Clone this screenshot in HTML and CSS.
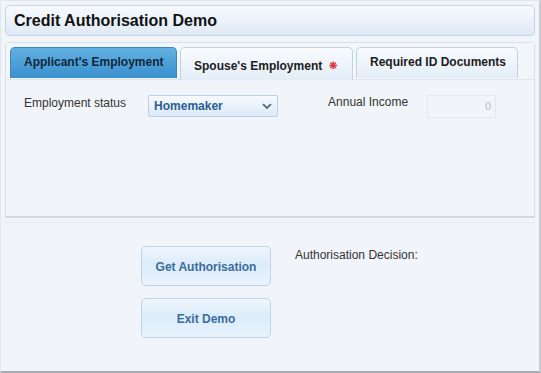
FILE: index.html
```html
<!DOCTYPE html>
<html>
<head>
<meta charset="utf-8">
<link rel="stylesheet" href="styles.css">
</head>
<body>
<div class="app">
  <header class="titlebar">Credit Authorisation Demo</header>
  <div class="tabpanel">
    <div class="tabs">
      <div class="tab active">Applicant's Employment</div>
      <div class="tab hover">Spouse's Employment <span class="req">&#x274B;</span></div>
      <div class="tab">Required ID Documents</div>
    </div>
    <div class="tab-body">
      <div class="field">
        <span class="label">Employment status</span>
        <div class="select"><span>Homemaker</span>
          <svg class="chev" width="10" height="7" viewBox="0 0 10 7"><path d="M1 1.2 L5 5 L9 1.2" fill="none" stroke="#4f6a86" stroke-width="1.8"/></svg>
        </div>
      </div>
      <div class="field income">
        <span class="label">Annual Income</span>
        <div class="input">0</div>
      </div>
    </div>
  </div>
  <div class="sep"></div>
  <div class="actions">
    <div class="buttons">
      <button class="btn">Get Authorisation</button>
      <button class="btn">Exit Demo</button>
    </div>
    <div class="decision">Authorisation Decision:</div>
  </div>
</div>
</body>
</html>
```
FILE: styles.css
```css
* { box-sizing: border-box; }
html, body { margin: 0; padding: 0; }
body {
  font-family: "Liberation Sans", Arial, sans-serif;
  background: #f1f4f8;
  color: #333;
}
.app {
  width: 541px;
  height: 373px;
  background: #f1f4f8;
  border: 1px solid #e2e7ee;
  border-right: 2px solid #c9ccd0;
  border-bottom: 2px solid #a9acb0;
  padding: 4px 4px 0 4px;
  display: flex;
  flex-direction: column;
}
.titlebar {
  height: 31px;
  border: 1px solid #c6d4e3;
  border-radius: 5px;
  background: linear-gradient(#f7fafd, #dfeaf6);
  font-weight: bold;
  font-size: 16px;
  color: #111;
  padding: 0 0 0 8px;
  line-height: 29px;
}
.tabpanel {
  margin-top: 6px;
  height: 176px;
  border: 1px solid #d9e0e8;
  border-bottom: 2px solid #d3d9e0;
  border-radius: 4px 4px 0 0;
  background: #f1f4f8;
  display: flex;
  flex-direction: column;
}
.tabs {
  display: flex;
  align-items: flex-start;
  padding: 4px 0 0 4px;
  gap: 3px;
  height: 37px;
  border-bottom: 1px solid #dde5ee;
  background: #f3f6f9;
}
.tab {
  height: 31px;
  border: 1px solid #c3d3e3;
  border-bottom: none;
  border-radius: 5px 5px 0 0;
  background: linear-gradient(#f8fbfe, #e3edf7);
  font-weight: bold;
  font-size: 12px;
  color: #1c1c1c;
  padding: 0 12px;
  line-height: 29px;
  white-space: nowrap;
}
.tab.active {
  width: 167px;
  background: linear-gradient(#62b1e2, #3a90cd);
  border-color: #3b87c0;
  color: #13263a;
  padding-left: 13px;
}
.tab.hover {
  width: 173px;
  height: 33px;
  line-height: 36px;
  padding-left: 13px;
}
.tab:last-child { width: 162px; padding-left: 13px; }
.req { color: #e0394a; font-size: 10px; margin-left: 3px; vertical-align: 1px; }
.tab-body {
  display: flex;
  padding: 15px 0 0 18px;
}
.field { display: flex; align-items: flex-start; }
.label { font-size: 12px; color: #333; line-height: 14px; margin-top: 1px; }
.select {
  margin-left: 22px;
  width: 130px;
  height: 22px;
  border: 1px solid #b8d0e8;
  border-radius: 2px;
  background: linear-gradient(#f6fafe, #dde9f6);
  display: flex;
  align-items: center;
  justify-content: space-between;
  padding: 0 5px 0 5px;
  font-size: 12px;
  font-weight: bold;
  color: #2c5d92;
}
.chev { margin-top: 1px; }
.income { margin-left: 50px; }
.income .label { margin-top: 0; }
.input {
  margin-left: 19px;
  width: 69px;
  height: 23px;
  border: 1px solid #e4e8ec;
  background: #f1f4f8;
  font-size: 11px;
  color: #b8bcc0;
  text-align: right;
  padding: 4px 4px 0 0;
}
.sep {
  height: 1px;
  margin: 4px 0 0 0;
  background: #e6ebf1;
}
.actions {
  display: flex;
  padding: 23px 0 0 136px;
}
.buttons { display: flex; flex-direction: column; gap: 12px; }
.btn {
  width: 130px;
  height: 40px;
  border: 1px solid #bfd3e6;
  border-radius: 5px;
  background: linear-gradient(#eef6fd 0%, #dcecfa 45%, #e8f3fd 100%);
  font-family: "Liberation Sans", Arial, sans-serif;
  font-weight: bold;
  font-size: 12px;
  color: #3a6c9c;
  padding: 2px 0 0 0;
}
.decision {
  margin: 2px 0 0 24px;
  font-size: 12px;
  color: #333;
}
```
